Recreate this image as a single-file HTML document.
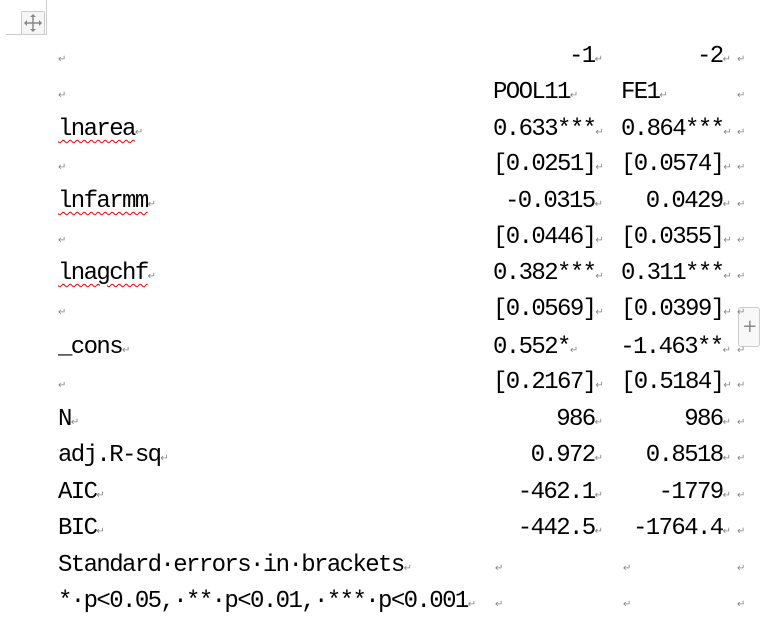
<!DOCTYPE html>
<html><head><meta charset="utf-8"><style>
body{margin:0;width:769px;height:620px;background:#fff;position:relative;overflow:hidden;font-family:"Liberation Mono","Noto Serif CJK SC",monospace;font-size:24px;letter-spacing:-1.6px;color:#000}
.t{position:absolute;line-height:36px;height:36px;white-space:pre}
.m{color:#888;font-size:10px;letter-spacing:0;font-family:"DejaVu Sans",sans-serif}
.sq{text-decoration:underline wavy #e00;text-decoration-thickness:1px;text-underline-offset:4px}
</style></head><body>
<div style="position:absolute;left:6px;top:0;width:40px;height:34px;border-right:1px solid #ccc;border-bottom:1px solid #ccc"></div>
<div style="position:absolute;left:21px;top:11px;width:22px;height:22px;border:1px solid #ccc;border-radius:2px;background:#f6f6f6">
<svg width="22" height="22" viewBox="0 0 22 22"><g stroke="#888" stroke-width="1.5" fill="#888"><line x1="11" y1="4" x2="11" y2="18"/><line x1="4" y1="11" x2="18" y2="11"/></g><g fill="#888"><path d="M11 2 8 5h6z"/><path d="M11 20 8 17h6z"/><path d="M2 11 5 8v6z"/><path d="M20 11 17 8v6z"/></g></svg></div>
<div style="position:absolute;left:738px;top:307px;width:20px;height:38px;border:1px solid #ccc;border-radius:3px;background:#f8f8f8;color:#888;font:18px 'DejaVu Sans';text-align:center;line-height:38px">+</div>
<div id="c"></div>
<script>
const rows=[
["",null,"-1","R",null,"-2","R"],
["",null,"POOL11","L",null,"FE1","L"],
["lnarea",1,"0.633***","L",null,"0.864***","L"],
["",null,"[0.0251]","L",null,"[0.0574]","L"],
["lnfarmm",1,"-0.0315","R",null,"0.0429","R"],
["",null,"[0.0446]","L",null,"[0.0355]","L"],
["lnagchf",1,"0.382***","L",null,"0.311***","L"],
["",null,"[0.0569]","L",null,"[0.0399]","L"],
["_cons",0,"0.552*","L",null,"-1.463**","R"],
["",null,"[0.2167]","L",null,"[0.5184]","L"],
["N",0,"986","R",null,"986","R"],
["adj.R-sq",0,"0.972","R",null,"0.8518","R"],
["AIC",0,"-462.1","R",null,"-1779","R"],
["BIC",0,"-442.5","R",null,"-1764.4","R"],
["Standard·errors·in·brackets",0,"","E",null,"","E"],
["*·p&lt;0.05,·**·p&lt;0.01,·***·p&lt;0.001",0,"","E",null,"","E"]];
const cy=[57,93,130,165,202,238,274,310,348,383,420,456,493,529,566,602];
let h="";const M='<span class="m">↵</span>';
rows.forEach((r,i)=>{const top=cy[i]-18;
 const lab=r[0]?(r[1]?'<span class="sq">'+r[0]+'</span>':r[0]):"";
 h+=`<div class="t" style="left:58px;top:${top}px">${lab}${M}</div>`;
 [[r[2],r[3],493,595],[r[5],r[6],621,723]].forEach(([s,a,L,R])=>{
  if(a==="E"){h+=`<div class="t" style="left:${L+2}px;top:${top}px">${M}</div>`;}
  else if(a==="L")h+=`<div class="t" style="left:${L}px;top:${top}px">${s}${M}</div>`;
  else h+=`<div class="t" style="right:${769-R-8}px;top:${top}px">${s}${M}</div>`;
 });
 h+=`<div class="t" style="left:737px;top:${top}px">${M}</div>`;
});
document.getElementById("c").innerHTML=h;
</script>
</body></html>
